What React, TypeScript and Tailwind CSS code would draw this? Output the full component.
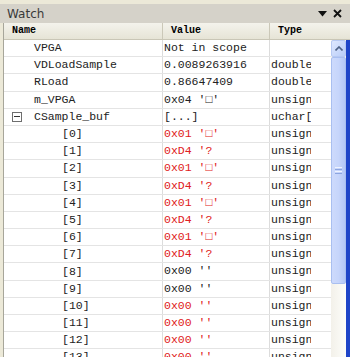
import React from "react";

type Row = {
  name: string;
  value: string;
  type: string;
  level: 0 | 1;
  red?: boolean;
  expander?: boolean;
};

const rows: Row[] = [
  { name: "VPGA", value: "Not in scope", type: "", level: 0 },
  { name: "VDLoadSample", value: "0.0089263916", type: "double", level: 0 },
  { name: "RLoad", value: "0.86647409", type: "double", level: 0 },
  { name: "m_VPGA", value: "0x04 '\u25A1'", type: "unsigned char", level: 0 },
  { name: "CSample_buf", value: "[...]", type: "uchar[20]", level: 0, expander: true },
  { name: "[0]", value: "0x01 '\u25A1'", type: "unsigned char", level: 1, red: true },
  { name: "[1]", value: "0xD4 '?", type: "unsigned char", level: 1, red: true },
  { name: "[2]", value: "0x01 '\u25A1'", type: "unsigned char", level: 1, red: true },
  { name: "[3]", value: "0xD4 '?", type: "unsigned char", level: 1, red: true },
  { name: "[4]", value: "0x01 '\u25A1'", type: "unsigned char", level: 1, red: true },
  { name: "[5]", value: "0xD4 '?", type: "unsigned char", level: 1, red: true },
  { name: "[6]", value: "0x01 '\u25A1'", type: "unsigned char", level: 1, red: true },
  { name: "[7]", value: "0xD4 '?", type: "unsigned char", level: 1, red: true },
  { name: "[8]", value: "0x00 ''", type: "unsigned char", level: 1 },
  { name: "[9]", value: "0x00 ''", type: "unsigned char", level: 1 },
  { name: "[10]", value: "0x00 ''", type: "unsigned char", level: 1, red: true },
  { name: "[11]", value: "0x00 ''", type: "unsigned char", level: 1, red: true },
  { name: "[12]", value: "0x00 ''", type: "unsigned char", level: 1, red: true },
  { name: "[13]", value: "0x00 ''", type: "unsigned char", level: 1, red: true },
];

const mono = { fontFamily: '"Liberation Mono", "DejaVu Sans Mono", monospace' };

export default function App() {
  return (
    <div className="w-[350px] h-[357px] overflow-hidden bg-[#ece9d8] flex flex-col select-none">
      {/* top strip */}
      <div className="h-[4px] shrink-0 bg-[#ece9d8]" />

      {/* title bar */}
      <div className="h-[19px] shrink-0 bg-[#d5d2c9] flex items-center pl-[7px] pr-[8px]">
        <span
          className="text-[12px] text-[#3a3a3a] leading-none"
          style={{ fontFamily: '"DejaVu Sans", "Liberation Sans", sans-serif' }}
        >
          Watch
        </span>
        <div className="ml-auto flex items-center gap-[6px]">
          <svg width="9" height="6" viewBox="0 0 9 6">
            <path d="M0 0 H9 L4.5 5.5 Z" fill="#111" />
          </svg>
          <svg width="9" height="9" viewBox="0 0 9 9">
            <path d="M1 1 L8 8 M8 1 L1 8" stroke="#111" strokeWidth="1.8" />
          </svg>
        </div>
      </div>

      <div className="flex-1 flex min-h-0">
        {/* left edge */}
        <div className="w-[3px] shrink-0 bg-[#ece9d8]" />
        <div className="flex-1 flex flex-col min-w-0 border-l border-[#a7a69a]">
          {/* header */}
          <div
            className="h-[17px] shrink-0 flex bg-gradient-to-b from-[#f4f3ec] to-[#e6e4d6] border-b border-[#c9c6b6] text-[10px] font-bold text-black leading-[16px]"
            style={mono}
          >
            <div className="w-[159px] shrink-0 pl-[8px] border-r border-[#cbc8b8]">Name</div>
            <div className="w-[107px] shrink-0 pl-[8px] border-r border-[#cbc8b8]">Value</div>
            <div className="flex-1 pl-[8px]">Type</div>
          </div>

          <div className="flex-1 flex min-h-0">
            {/* list */}
            <div className="flex-1 bg-white overflow-hidden text-[11.5px]" style={mono}>
              {rows.map((r) => (
                <div key={r.name} className="h-[17.2px] flex border-b border-[#e4e4e4] leading-[16px]">
                  <div
                    className={
                      "w-[159px] shrink-0 flex items-center border-r border-[#dcdcdc] text-[#222] " +
                      (r.level === 0 ? "pl-[30px]" : "pl-[58px]")
                    }
                  >
                    {r.expander && (
                      <span className="w-[10px] h-[10px] border border-[#6e6e6e] -ml-[22px] mr-[12px] flex items-center justify-center">
                        <span className="w-[6px] h-[1px] bg-[#333]" />
                      </span>
                    )}
                    <span className="whitespace-pre">{r.name}</span>
                  </div>
                  <div
                    className={
                      "w-[107px] shrink-0 pl-[1px] border-r border-[#dcdcdc] whitespace-pre overflow-hidden " +
                      (r.red ? "text-[#e02020]" : "text-[#222]")
                    }
                  >
                    {r.value}
                  </div>
                  <div className="w-[41px] shrink-0 pl-[1px] whitespace-pre overflow-hidden text-[#222]">
                    {r.type}
                  </div>
                </div>
              ))}
            </div>

            {/* vertical scrollbar */}
            <div className="w-[15px] shrink-0 flex flex-col bg-[#f5f4ee]">
              <div className="h-[17px] shrink-0 rounded-[2px] border border-[#b7c9f3] bg-gradient-to-br from-[#dfe8fe] to-[#b9cdf8] flex items-center justify-center">
                <svg width="8" height="5" viewBox="0 0 8 5">
                  <path d="M0.5 4.5 L4 1 L7.5 4.5" stroke="#4d6185" strokeWidth="1.6" fill="none" />
                </svg>
              </div>
              <div className="h-[227px] shrink-0 rounded-[2px] border border-[#a9bff0] bg-gradient-to-r from-[#cddafc] via-[#c6d5fb] to-[#b4c8f6] flex flex-col items-center justify-center gap-[1px]">
                <span className="w-[7px] h-[1px] bg-[#eef3ff]" />
                <span className="w-[7px] h-[1px] bg-[#8ca5e0]" />
                <span className="w-[7px] h-[1px] bg-[#eef3ff]" />
                <span className="w-[7px] h-[1px] bg-[#8ca5e0]" />
              </div>
              <div className="flex-1 bg-gradient-to-r from-[#f3f1ea] to-[#fdfdfa]" />
            </div>

            {/* right window edge */}
            <div className="w-[4px] shrink-0 bg-[#1f45c8]" />
          </div>
        </div>
      </div>
    </div>
  );
}
